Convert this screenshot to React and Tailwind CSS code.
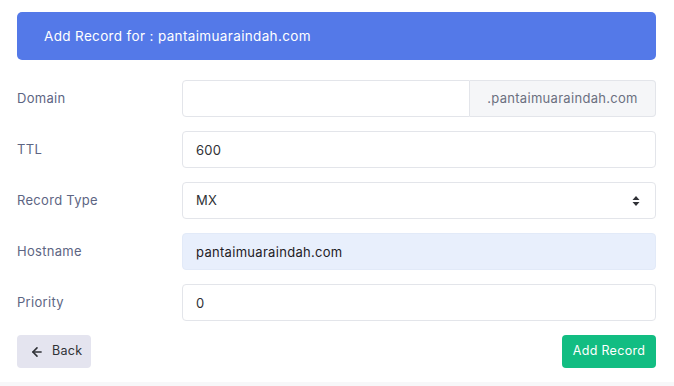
import { ArrowLeft } from "lucide-react";

const labelCls = "w-[165px] shrink-0 text-[13px] tracking-[0.3px] text-[#5d6583]";
const inputCls =
  "h-[37px] flex-1 rounded-[4px] border px-[13px] text-[13px] tracking-[0.3px] outline-none";
const plain = "border-[#e3e5ea] bg-white text-[#2f3136]";

const Row = ({ label, children }) => (
  <div className="flex items-center">
    <div className={labelCls}>{label}</div>
    <div className="flex flex-1">{children}</div>
  </div>
);

export default function App() {
  return (
    <div
      className="h-[386px] w-[674px] overflow-hidden bg-white"
      style={{ fontFamily: "Inter, 'Open Sans', sans-serif" }}
    >
      <div className="px-[17px] pt-[12px] pr-[18px]">
        {/* Header */}
        <div className="flex h-[48px] items-center rounded-[5px] bg-[#5479e8] px-[27px] text-[13.5px] tracking-[0.35px] text-white">
          Add Record for : pantaimuaraindah.com
        </div>

        {/* Form */}
        <div className="mt-[20px] flex flex-col gap-[14px]">
          <Row label="Domain">
            <input className={`${inputCls} ${plain} rounded-r-none`} defaultValue="" />
            <div className="flex h-[37px] w-[186px] items-center justify-center rounded-r-[4px] border border-l-0 border-[#e3e5ea] bg-[#f5f6f8] text-[13px] tracking-[0.3px] text-[#6b7080]">
              .pantaimuaraindah.com
            </div>
          </Row>
          <Row label="TTL">
            <input className={`${inputCls} ${plain}`} defaultValue="600" />
          </Row>
          <Row label="Record Type">
            <div className={`${inputCls} ${plain} flex items-center justify-between`}>
              <span>MX</span>
              <svg width="8" height="12" viewBox="0 0 8 12" className="mr-[2px]">
                <path d="M4 1 L7.5 5 H0.5 Z" fill="#2f3136" />
                <path d="M4 11 L7.5 7 H0.5 Z" fill="#2f3136" />
              </svg>
            </div>
          </Row>
          <Row label="Hostname">
            <input
              className={`${inputCls} border-[#e2eaf8] bg-[#e8effc] text-[#1f2024]`}
              defaultValue="pantaimuaraindah.com"
            />
          </Row>
          <Row label="Priority">
            <input className={`${inputCls} ${plain}`} defaultValue="0" />
          </Row>
        </div>

        {/* Actions */}
        <div className="mt-[14px] flex items-center justify-between">
          <button className="flex h-[33px] w-[74px] items-center gap-[8px] rounded-[4px] bg-[#e4e4ef] pl-[13px] text-[12.5px] tracking-[0.3px] text-[#2f3136]">
            <ArrowLeft size={14} strokeWidth={2.75} />
            Back
          </button>
          <button className="h-[33px] w-[94px] rounded-[4px] bg-[#12bd82] text-[12.5px] tracking-[0.3px] text-white">
            Add Record
          </button>
        </div>
      </div>
      <div className="mt-[14px] h-[10px] bg-[#f7f7f9]" />
    </div>
  );
}
